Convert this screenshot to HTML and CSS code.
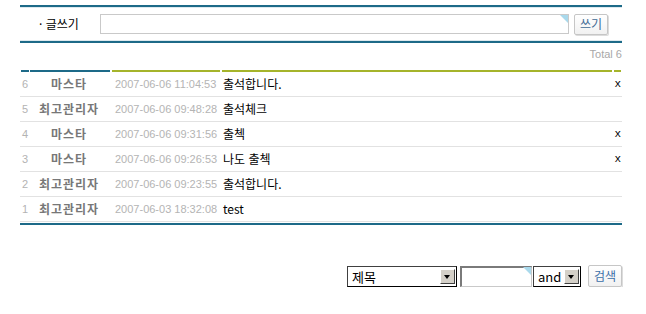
FILE: index.html
```html
<!DOCTYPE html>
<html lang="ko">
<head>
    <meta charset="UTF-8">
    <title>출석부</title>
    <link rel="stylesheet" href="styles.css">
</head>
<body>
    <section class="board">
        <form class="write">
            <label class="write-label" for="memo">· 글쓰기</label>
            <span class="field field-memo"><input type="text" id="memo"></span>
            <button type="button" class="btn">쓰기</button>
        </form>

        <div class="total">Total 6</div>

        <div class="list">
            <div class="list-head">
                <span class="bar teal"></span>
                <span class="bar teal"></span>
                <span class="bar olive"></span>
                <span class="bar olive"></span>
                <span class="bar olive"></span>
            </div>
            <div class="row">
                <span class="num">6</span><span class="name">마스타</span><span class="date">2007-06-06 11:04:53</span><span class="memo">출석합니다.</span><span class="del">x</span>
            </div>
            <div class="row">
                <span class="num">5</span><span class="name">최고관리자</span><span class="date">2007-06-06 09:48:28</span><span class="memo">출석체크</span><span class="del"></span>
            </div>
            <div class="row">
                <span class="num">4</span><span class="name">마스타</span><span class="date">2007-06-06 09:31:56</span><span class="memo">출첵</span><span class="del">x</span>
            </div>
            <div class="row">
                <span class="num">3</span><span class="name">마스타</span><span class="date">2007-06-06 09:26:53</span><span class="memo">나도 출첵</span><span class="del">x</span>
            </div>
            <div class="row">
                <span class="num">2</span><span class="name">최고관리자</span><span class="date">2007-06-06 09:23:55</span><span class="memo">출석합니다.</span><span class="del"></span>
            </div>
            <div class="row">
                <span class="num">1</span><span class="name">최고관리자</span><span class="date">2007-06-03 18:32:08</span><span class="memo">test</span><span class="del"></span>
            </div>
        </div>

        <form class="search">
            <span class="select select-field"><span class="select-text">제목</span><span class="arrow"></span></span>
            <span class="field field-search"><input type="text"></span>
            <span class="select select-op"><span class="select-text">and</span><span class="arrow"></span></span>
            <button type="button" class="btn btn-search">검색</button>
        </form>
    </section>
</body>
</html>
```

FILE: styles.css
```css
body {
    margin: 0;
    font-family: "Noto Sans CJK KR", "Liberation Sans", sans-serif;
    font-size: 12px;
    color: #000;
    background: #fff;
}

.board {
    width: 602px;
    margin: 5px 0 0 20px;
}

/* write box */
.write {
    display: flex;
    align-items: center;
    height: 34px;
    border-top: 2px solid #1d6a88;
    border-bottom: 2px solid #1d6a88;
    box-shadow: inset 0 1px 0 #dde9ee, inset 0 -1px 0 #dde9ee;
}

.write-label {
    width: 80px;
    box-sizing: border-box;
    padding-left: 19px;
    line-height: 14px;
}

.field {
    position: relative;
    display: block;
    height: 20px;
}

.field input {
    width: 100%;
    height: 100%;
    box-sizing: border-box;
    margin: 0;
    border: 1px solid #c9c9c9;
    padding: 0 4px;
    font: inherit;
    outline: none;
}

.field::after {
    content: "";
    position: absolute;
    top: 1px;
    right: 1px;
    border-style: solid;
    border-width: 0 8px 8px 0;
    border-color: transparent #a9d9ec transparent transparent;
}

.field-memo {
    width: 469px;
}

.btn {
    height: 21px;
    width: 34px;
    margin: 0 0 0 5px;
    padding: 0;
    border: 1px solid #c6c6c6;
    border-radius: 2px;
    background: linear-gradient(#ffffff, #f1f1f1);
    box-shadow: 1px 1px 0 #dcdcdc;
    color: #3f6a95;
    font: inherit;
    line-height: 18px;
}

.total {
    text-align: right;
    color: #a8a8a8;
    font-family: "Liberation Sans", sans-serif;
    font-size: 11px;
    line-height: 13px;
    padding: 5px 0 0;
    height: 22px;
}

/* list */
.list {
    border-bottom: 2px solid #1d6a88;
    padding-bottom: 1px;
}

.list-head,
.row {
    display: grid;
    grid-template-columns: 10px 82px 110px 392px 8px;
}

.bar {
    height: 2px;
    margin-right: 2px;
}

.bar:first-child {
    margin-left: 1px;
    margin-right: 1px;
}

.bar:last-child {
    margin-right: 1px;
}

.teal {
    background: #1d6a88;
}

.olive {
    background: #a5b42b;
}

.row {
    height: 24px;
    align-items: center;
    border-bottom: 1px solid #e2e2e2;
    line-height: 14px;
}

.num {
    padding-left: 2px;
    color: #b3b3b3;
    font-family: "Liberation Sans", sans-serif;
    font-size: 11px;
}

.name {
    text-align: center;
    font-weight: bold;
    color: #777;
    letter-spacing: 1px;
    padding-right: 4px;
}

.date {
    padding-left: 3px;
    color: #b4b4b4;
    font-family: "Liberation Sans", sans-serif;
    font-size: 11px;
    white-space: nowrap;
}

.memo {
    padding-left: 1px;
}

.del {
    font-family: "Liberation Mono", monospace;
    font-size: 11px;
    text-align: right;
    padding-right: 1px;
}

/* search */
.search {
    display: flex;
    justify-content: flex-end;
    align-items: center;
    margin-top: 40px;
}

.select {
    display: flex;
    align-items: center;
    height: 21px;
    box-sizing: border-box;
    border: 1px solid #000;
    border-top-color: #404040;
    border-left-color: #404040;
    background: #fff;
    padding: 1px;
}

.select-field {
    width: 110px;
}

.select-op {
    width: 48px;
}

.select-text {
    flex: 1;
    padding-left: 3px;
    font-size: 13px;
}

.arrow {
    position: relative;
    width: 15px;
    height: 15px;
    box-sizing: border-box;
    background: #d4d0c8;
    border: 1px solid;
    border-color: #fff #404040 #404040 #fff;
}

.arrow::after {
    content: "";
    position: absolute;
    left: 3px;
    top: 5px;
    border-style: solid;
    border-width: 4px 3.5px 0 3.5px;
    border-color: #000 transparent transparent transparent;
}

.field-search {
    width: 72px;
    height: 21px;
    margin: 0 1px 0 3px;
}

.field-search input {
    border: 1px solid #c9c9c9;
    border-top: 2px solid #7a7a7a;
    border-left: 2px solid #7a7a7a;
}

.btn-search {
    margin-left: 7px;
    height: 22px;
    color: #3b6fa8;
}
```
